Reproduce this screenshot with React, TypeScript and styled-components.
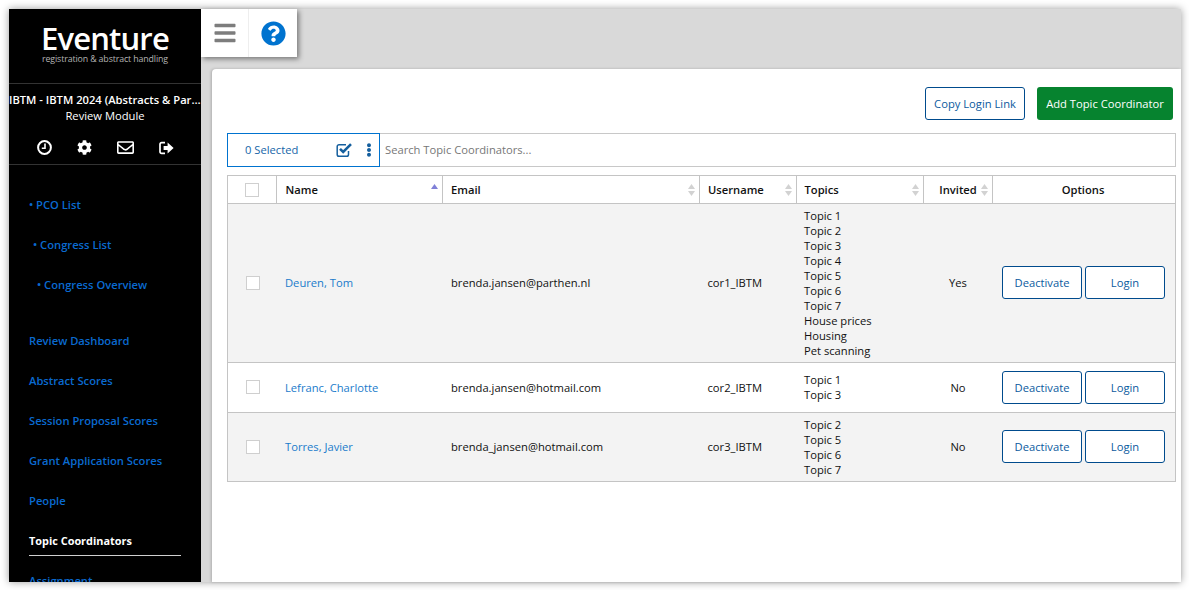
import React from "react";
import styled, { createGlobalStyle } from "styled-components";
import { FaBars, FaQuestionCircle, FaCog, FaRegEnvelope, FaEllipsisV } from "react-icons/fa";

const Global = createGlobalStyle`
  html, body { margin: 0; padding: 0; background: #fff; }
  body { font-family: "Open Sans", "Noto Sans", sans-serif; font-size: 11.2px; color: #111; overflow: hidden; }
  * { box-sizing: border-box; }
`;

const Frame = styled.div`
  position: absolute; left: 9px; top: 9px; width: 1172px; height: 573px;
  display: flex; background: #d9d9d9; box-shadow: 0 0 8px rgba(0,0,0,.4);
`;
const Sidebar = styled.aside`
  width: 192px; height: 100%; background: #000; overflow: hidden; flex: none; color: #fff;
`;
const LogoBlock = styled.div`
  height: 75px; border-bottom: 1px solid #333; display: flex; flex-direction: column; align-items: center; padding-top: 13px;
`;
const LogoName = styled.div`
  font-size: 31px; line-height: 32px; letter-spacing: -.85px; color: #fff; font-weight: 600;
`;
const LogoTag = styled.div`
  font-size: 8.8px; line-height: 10px; color: #b4b4b4; letter-spacing: -.12px;
`;
const ContextBlock = styled.div`
  height: 81px; border-bottom: 1px solid #333; padding-top: 8px; text-align: center;
`;
const Congress = styled.div`
  font-weight: 600; font-size: 11.2px; line-height: 16px; white-space: nowrap; overflow: hidden; text-overflow: ellipsis; color: #fff;
`;
const Module = styled.div`
  font-size: 11.2px; line-height: 16px; color: #fff;
`;
const QuickIcons = styled.div`
  display: flex; justify-content: space-between; align-items: center; padding: 0 27px 0 28px; margin-top: 15px; font-size: 15px; height: 17px;
  svg { display: block; }
`;
const Nav = styled.nav`
  display: flex; flex-direction: column; padding: 20px 0 0 20px;
`;
const SubItem = styled.a<{ $indent: number }>`
  height: 40px; line-height: 40px; padding-left: ${p => p.$indent}px; color: #0a6ad0; font-weight: 600; font-size: 11.2px; white-space: nowrap;
`;
const NavItem = styled.a<{ $active?: boolean; $first?: boolean }>`
  height: 40px; line-height: 40px; width: 152px; color: ${p => (p.$active ? "#fff" : "#0a6ad0")}; font-weight: ${p => (p.$active ? 700 : 600)}; white-space: nowrap;
  font-size: ${p => (p.$active ? "10.9px" : "11.2px")};
  margin-top: ${p => (p.$first ? 16 : 0)}px;
  ${p => p.$active && "height: 35px; line-height: 40px; border-bottom: 1px solid #d0d0d0; margin-bottom: 5px;"}
`;
const Content = styled.main`
  flex: 1; position: relative; min-width: 0;
`;
const TopTools = styled.div`
  position: absolute; left: 0; top: 0; width: 96px; height: 48px; background: #fff; display: flex; box-shadow: 2px 2px 5px rgba(0,0,0,.45); z-index: 2;
`;
const ToolButton = styled.div<{ $divider?: boolean }>`
  width: 48px; height: 48px; display: flex; align-items: center; justify-content: center;
  ${p => p.$divider && "border-right: 1px solid #eee;"}
`;
const Card = styled.section`
  position: absolute; left: 11px; top: 60px; right: 0; bottom: 0; background: #fff; border-radius: 4px 0 0 0; box-shadow: -1px 0 3px rgba(0,0,0,.2);
  padding: 18px 5px 0 15px;
`;
const Actions = styled.div`
  display: flex; justify-content: flex-end; gap: 12px; padding-right: 3px; height: 33px;
`;
const OutlineButton = styled.button<{ $w: number; $nudge?: number }>`
  width: ${p => p.$w}px; height: 33px; background: #fff; border: 1px solid #004b8d; border-radius: 3px; color: #0b5a9e;
  font: 400 11.2px "Open Sans", sans-serif; padding: 0 0 0 ${p => p.$nudge ?? 0}px; cursor: pointer;
`;
const GreenButton = styled.button`
  width: 136px; height: 33px; background: #06832f; border: 0; border-radius: 3px; color: #fff; font: 400 11.2px "Open Sans", sans-serif; padding: 0;
`;
const Toolbar = styled.div`
  display: flex; height: 34px; margin-top: 13px;
`;
const SelectedBox = styled.div`
  width: 153px; border: 1px solid #0073cf; display: flex; align-items: center; padding: 0 0 2px 17px; color: #1565a8; flex: none; position: relative;
`;
const SelectIcon = styled.svg`
  position: absolute; left: 108px; top: 8px; width: 17px; height: 16px;
`;
const MoreIcon = styled.span`
  position: absolute; left: 134px; top: 9px; font-size: 14px; color: #155f9e; svg { display: block; }
`;
const Search = styled.input`
  flex: 1; border: 1px solid #c8c8c8; border-left: 0; font: 400 11.2px "Open Sans", sans-serif; padding: 0 5px 2px; outline: none; min-width: 0;
  &::placeholder { color: #777; opacity: 1; }
`;
const Table = styled.table`
  margin-top: 8px; width: 949px; table-layout: fixed; border-collapse: collapse; border: 1px solid #c4c4c4;
`;
const Head = styled.th<{ $center?: boolean; $pad?: number; $pr?: number }>`
  height: 28px; padding: 0 ${p => p.$pr ?? 0}px 0 ${p => (p.$center ? 0 : p.$pad ?? 8)}px; border: 1px solid #c4c4c4; font-size: 11.2px; font-weight: 600; text-align: ${p => (p.$center ? "center" : "left")}; position: relative; background: #fff; color: #111;
`;
const Sort = styled.svg`
  position: absolute; right: 4px; top: 7px; width: 7px; height: 14px;
`;
const Row = styled.tr<{ $alt?: boolean; $h: number }>`
  height: ${p => p.$h}px; background: ${p => (p.$alt ? "#f3f3f3" : "#fff")}; border-bottom: 1px solid #c4c4c4;
`;
const Cell = styled.td<{ $center?: boolean; $pad?: number }>`
  padding: 0 0 1px ${p => p.$pad ?? 8}px; font-size: 11.2px; color: #111; line-height: 15px; ${p => p.$center && "text-align: center; padding: 0 0 1px;"}
`;
const Check = styled.span<{ $shift?: boolean }>`
  display: block; width: 14px; height: 14px; background: #fff; border: 1px solid #cfcfcf; margin: 0 auto; position: relative; left: ${p => (p.$shift ? 1 : 0)}px;
`;
const NameLink = styled.a`
  color: #1a7bcb;
`;
const Options = styled.div`
  display: flex; gap: 3px; padding-left: 1px;
`;
const TopicLine = styled.div`
  white-space: nowrap;
`;

const SortIcon = ({ active }: { active?: boolean }) => (
  <Sort viewBox="0 0 7 14">
    {active ? (
      <path d="M3.5 1 L7 6 L0 6 Z" fill="#8080d8" />
    ) : (
      <>
        <path d="M3.5 1 L7 6 L0 6 Z" fill="#d2d2d2" />
        <path d="M3.5 13 L7 8 L0 8 Z" fill="#d2d2d2" />
      </>
    )}
  </Sort>
);

const ClockIcon = () => (
  <svg width="15" height="15" viewBox="0 0 15 15">
    <circle cx="7.5" cy="7.5" r="6.4" fill="none" stroke="#fff" strokeWidth="2" />
    <path d="M8 3.6 V8.2 H4.8" fill="none" stroke="#fff" strokeWidth="1.6" />
  </svg>
);

const ExitIcon = () => (
  <svg width="15" height="14" viewBox="0 0 15 14">
    <path d="M6 1.6 H2.6 A1.6 1.6 0 0 0 1 3.2 V10.8 A1.6 1.6 0 0 0 2.6 12.4 H6" fill="none" stroke="#fff" strokeWidth="1.7" />
    <path d="M4.6 5 H8.6 V1.6 L14.6 7 L8.6 12.4 V9 H4.6 Z" fill="#fff" />
  </svg>
);

const rows = [
  { name: "Deuren, Tom", email: "brenda.jansen@parthen.nl", user: "cor1_IBTM", topics: ["Topic 1","Topic 2","Topic 3","Topic 4","Topic 5","Topic 6","Topic 7","House prices","Housing","Pet scanning"], invited: "Yes", h: 159, alt: true },
  { name: "Lefranc, Charlotte", email: "brenda.jansen@hotmail.com", user: "cor2_IBTM", topics: ["Topic 1","Topic 3"], invited: "No", h: 50, alt: false },
  { name: "Torres, Javier", email: "brenda_jansen@hotmail.com", user: "cor3_IBTM", topics: ["Topic 2","Topic 5","Topic 6","Topic 7"], invited: "No", h: 69, alt: true },
];

export default function App() {
  return (
    <>
      <Global />
      <Frame>
        <Sidebar>
          <LogoBlock>
            <LogoName>Eventure</LogoName>
            <LogoTag>registration &amp; abstract handling</LogoTag>
          </LogoBlock>
          <ContextBlock>
            <Congress>IBTM - IBTM 2024 (Abstracts &amp; Participants)</Congress>
            <Module>Review Module</Module>
            <QuickIcons>
              <ClockIcon /><FaCog /><FaRegEnvelope size={17} /><ExitIcon />
            </QuickIcons>
          </ContextBlock>
          <Nav>
            <SubItem $indent={0}>• PCO List</SubItem>
            <SubItem $indent={4}>• Congress List</SubItem>
            <SubItem $indent={8}>• Congress Overview</SubItem>
            <NavItem $first>Review Dashboard</NavItem>
            <NavItem>Abstract Scores</NavItem>
            <NavItem>Session Proposal Scores</NavItem>
            <NavItem>Grant Application Scores</NavItem>
            <NavItem>People</NavItem>
            <NavItem $active>Topic Coordinators</NavItem>
            <NavItem>Assignment</NavItem>
          </Nav>
        </Sidebar>
        <Content>
          <TopTools>
            <ToolButton $divider><FaBars size={24} color="#7d7d7d" /></ToolButton>
            <ToolButton><FaQuestionCircle size={25} color="#0073cf" /></ToolButton>
          </TopTools>
          <Card>
            <Actions>
              <OutlineButton $w={100}>Copy Login Link</OutlineButton>
              <GreenButton>Add Topic Coordinator</GreenButton>
            </Actions>
            <Toolbar>
              <SelectedBox>
                0 Selected
                <SelectIcon viewBox="0 0 17 16">
                  <path d="M12.5 9 V12.5 A1.8 1.8 0 0 1 10.7 14.3 H3 A1.8 1.8 0 0 1 1.2 12.5 V4.5 A1.8 1.8 0 0 1 3 2.7 H10" fill="none" stroke="#155f9e" strokeWidth="1.5" />
                  <path d="M4 6.8 L7.2 10 L15 2.2" fill="none" stroke="#155f9e" strokeWidth="2.6" />
                </SelectIcon>
                <MoreIcon><FaEllipsisV /></MoreIcon>
              </SelectedBox>
              <Search placeholder="Search Topic Coordinators..." />
            </Toolbar>
            <Table>
              <colgroup>
                <col style={{ width: 49 }} /><col style={{ width: 166 }} /><col style={{ width: 257 }} /><col style={{ width: 97 }} /><col style={{ width: 127 }} /><col style={{ width: 69 }} /><col />
              </colgroup>
              <thead>
                <tr>
                  <Head $center><Check /></Head>
                  <Head $pad={8.5}>Name<SortIcon active /></Head>
                  <Head>Email<SortIcon /></Head>
                  <Head>Username<SortIcon /></Head>
                  <Head $pad={7.5}>Topics<SortIcon /></Head>
                  <Head $center>Invited<SortIcon /></Head>
                  <Head $center $pr={2}>Options</Head>
                </tr>
              </thead>
              <tbody>
                {rows.map(r => (
                  <Row key={r.name} $alt={r.alt} $h={r.h}>
                    <Cell $center><Check $shift /></Cell>
                    <Cell $pad={8.5}><NameLink>{r.name}</NameLink></Cell>
                    <Cell $pad={8.5}>{r.email}</Cell>
                    <Cell>{r.user}</Cell>
                    <Cell $pad={7.5}>{r.topics.map(t => <TopicLine key={t}>{t}</TopicLine>)}</Cell>
                    <Cell $center>{r.invited}</Cell>
                    <Cell>
                      <Options>
                        <OutlineButton $w={80} $nudge={1}>Deactivate</OutlineButton>
                        <OutlineButton $w={80} $nudge={1}>Login</OutlineButton>
                      </Options>
                    </Cell>
                  </Row>
                ))}
              </tbody>
            </Table>
          </Card>
        </Content>
      </Frame>
    </>
  );
}
